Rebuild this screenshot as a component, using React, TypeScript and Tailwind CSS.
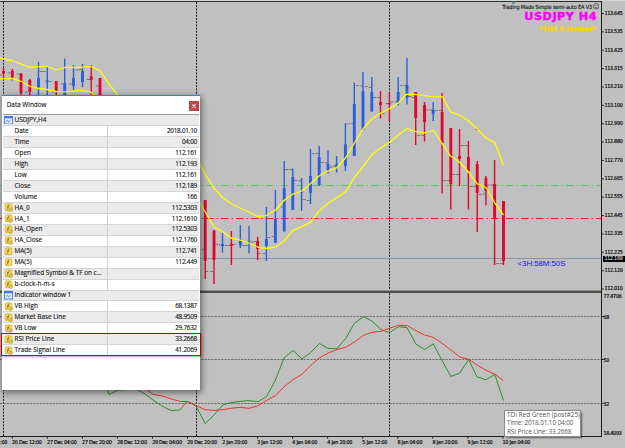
import React from "react";

type Candle = [number, number, number, number, number, "r" | "b"];

// x, wick top, wick bottom, body top, body bottom, direction
const candles: Candle[] = [
  [3.5, 67, 78, 71, 73.5, "r"], [12.3, 69, 80.5, 71, 77, "r"], [21, 73, 100, 73.5, 93, "r"], [29.8, 79, 100, 80, 92, "r"],
  [38.5, 62, 100, 78, 87, "b"], [47.3, 67, 100, 80.5, 82, "b"], [56.2, 81, 100, 81, 91, "r"], [64.7, 58.5, 100, 83, 98, "b"],
  [73.5, 65, 90, 78, 86, "b"], [82.5, 64, 87, 71, 82, "b"], [91.2, 65, 100, 76.5, 80, "r"], [100, 78, 100, 78, 100, "r"],
  [205.2, 200, 279, 200, 261, "r"], [214, 230, 284, 230.5, 260, "r"], [222.5, 233, 252.5, 244, 246, "b"], [231.4, 231, 265, 244, 246, "r"],
  [240.3, 225, 248, 239.5, 245.5, "b"], [249, 226, 253.5, 241.5, 243, "b"], [257.6, 237, 260, 241, 249, "r"], [266.4, 207, 261, 239, 246, "b"],
  [275.4, 190, 243, 219, 242.5, "b"], [284.2, 161, 232, 188, 231, "b"], [292.8, 168.5, 210, 177, 210, "b"], [301.6, 178, 211, 191, 192.5, "b"],
  [310.5, 149, 204, 176, 193, "b"], [319.2, 146, 186, 157, 185, "b"], [328, 150.5, 173.5, 164, 170, "b"], [336.6, 156, 172.5, 164, 167, "b"],
  [345.4, 123, 171, 144.5, 166, "b"], [354.3, 82.5, 156, 104, 156, "b"], [363, 72, 130, 91, 130, "b"], [371.8, 77, 111.5, 92, 111.5, "b"],
  [380.5, 91, 118.5, 102, 105, "r"], [389.4, 92, 121.5, 103, 104.5, "r"], [398.2, 77, 105.5, 92, 103, "b"], [407, 58, 104.5, 85, 98, "b"],
  [415.7, 92, 145, 92, 118, "r"], [424.5, 102, 141.5, 105, 122, "r"], [433.2, 102, 121, 110, 114, "b"], [442.1, 93, 193.5, 112, 143, "r"],
  [450.8, 128, 209.5, 128, 184, "r"], [459.5, 129, 186, 156, 159, "r"], [468.4, 141, 209.5, 157, 171, "r"], [477.2, 161, 232, 164, 193, "r"],
  [485.9, 176, 205.5, 178, 191, "r"], [494.6, 160, 265, 184, 218, "r"], [503.5, 201, 265, 201, 261, "r"],
];

// open / close marks beside the bars
const marks: [number, number][] = [
  [0, 75], [9, 73], [18, 74], [26, 92], [41, 71.5], [44, 71.5], [50, 81.5], [53, 92], [62, 84], [70, 84], [77, 70], [80, 69.5], [88, 79.5], [97, 86],
  [203, 249.5], [206.5, 271.5], [211.5, 271.5], [216.5, 244.3], [220, 245], [226, 245.5], [229, 245.5], [234, 244.5], [237, 239.5], [243, 245.5], [246.5, 245.5], [252, 242], [255, 241.5], [259, 253.5], [264, 253.5], [268.5, 237.5], [273, 236.5],
  [282, 207], [286.5, 169.5], [290.5, 169.5], [295.5, 180.5], [299.5, 181], [304, 199.5], [308, 200.5], [313, 153.5], [317, 153.5], [322, 162.5], [326, 163], [331, 167], [334.5, 166],
  [348, 124], [352, 123.5], [357, 85.5], [361, 86], [366, 86.5], [370, 87.5], [374.5, 97.5], [378.5, 97.5], [383, 113.5], [387, 103.5], [392, 102], [396, 101.5], [401, 85.5], [405, 85.5], [409.5, 96.5], [413, 97.5],
  [418.5, 135.5], [422.5, 135.5], [427, 110], [431, 110], [436, 110.5], [440, 110.5], [444.5, 180.5], [448.5, 180.5], [453.5, 174.5], [457.5, 174.5], [462, 145.5], [466, 145.5], [471, 186.5], [475, 186.5], [480, 194.5], [484, 194], [488.5, 185], [492, 185], [497.5, 263.5], [501.5, 263.5],
];

const upperA = "0,58 5,59 12,60.5 21,64 30,67.3 38,66.7 47.5,66.5 56,70 64.5,67.5 80,67.3 91,66.5 100,70.5 109,84 120,98";
const upperB = "199,162 205,174 214,188 223,198 231,203.5 240,208 249,212 257.5,216.5 266,215.7 275.5,210 284,200.5 293,194 302,191 310,184 319,176 328,171 336.5,168 345.5,158 354.3,143 363,129 371.5,119.3 380.5,113.3 389.4,108.7 398,103.3 406.5,94.3 415,94.4 430,96.4 442.5,96.8 450.7,112 459.3,115 468.4,120.8 477,128.6 486,138 494.8,142.6 503.5,165.5";
const lowerA = "0,78.7 12,78.7 21,81.3 30,86.3 38,88.3 47,89.5 56,91.3 65,91.8 80,90.4 91,92 96,100";
const lowerB = "199,202 205.2,212 214,227 222.5,231.5 231,238 240,240 249,243 257.5,247 266.5,248.5 275.5,247 284,241 293,230.4 302,226.6 310.5,222.3 319,211 328,203.3 337,197.5 345.8,191.6 354,178 363,166.5 371.5,155.3 380.5,148 389.4,142.4 398,135.3 407,128.6 415,131.4 424.5,132.8 433.5,130.4 442.1,143.3 450.7,156.3 459.5,162 468.5,172 477,183.7 486,187.5 495,203.3 503.5,215";
const tdiGreen = "106,385 109,394.5 118,390 136,389 145,394 153,400 162,406 171,410.5 180,410 187,401 196,406 205.2,423.5 214,415 223,404.8 231,402.6 240,401.4 248,400.6 258,401.6 266.5,396.6 275.5,380 284,358 293,350.3 302,359 310.5,352.7 319.5,343.5 328,348.4 337,348.6 346,338 354.2,323.5 363.4,316.7 372,321 381,329.6 389.5,332.7 398.5,326.7 407,327.6 416,344.2 424.6,349.6 433.3,343.8 442,360.6 450.8,376.4 459.5,373.3 468.6,359.6 477,376.8 486,379.8 494.7,374.3 503.5,400.5";
const tdiRed = "136,382 147,390 153,394.3 162,396 171,398.8 180,401.4 188,401.6 196,405.5 205,409.7 214,410.4 223,409.7 231,408.3 240,407.3 249,408.3 257.5,406 266.5,400.5 275.5,395.5 284,386.7 293,379.7 302,374.3 310.5,365.7 319.3,358 328.3,353 336.7,349.7 345.6,347.3 354.5,342 363.5,335.3 372,332.3 381.5,331.3 390,328 398.5,325.3 407.5,325.7 416,330.7 424.7,335 433.3,337.4 442,343.3 451,350 460,357 468.7,359.3 477,365 486,370.3 495,374.3 503.5,380.7";

const prices = ["113.645", "113.535", "113.425", "113.315", "113.210", "113.100", "112.990", "112.880", "112.770", "112.665", "112.555", "112.445", "112.335", "112.225", "112.120", "112.010"];
const times = ["26 Dec 12:00", "27 Dec 04:00", "27 Dec 20:00", "28 Dec 12:00", "29 Dec 04:00", "29 Dec 20:00", "2 Jan 20:00", "3 Jan 12:00", "4 Jan 04:00", "4 Jan 20:00", "5 Jan 12:00", "8 Jan 04:00", "8 Jan 20:00", "9 Jan 12:00", "10 Jan 04:00"];

type Row = { k: string; v?: string; icon?: "chart" | "fx" | "f" };
const rows: Row[] = [
  { k: "USDJPY,H4", icon: "chart" },
  { k: "Date", v: "2018.01.10" },
  { k: "Time", v: "04:00" },
  { k: "Open", v: "112.161" },
  { k: "High", v: "112.193" },
  { k: "Low", v: "112.161" },
  { k: "Close", v: "112.189" },
  { k: "Volume", v: "166" },
  { k: "HA_0", v: "112.5303", icon: "fx" },
  { k: "HA_1", v: "112.1610", icon: "fx" },
  { k: "HA_Open", v: "112.5303", icon: "fx" },
  { k: "HA_Close", v: "112.1760", icon: "fx" },
  { k: "MA(5)", v: "112.741", icon: "f" },
  { k: "MA(5)", v: "112.449", icon: "f" },
  { k: "Magnified Symbol & TF on c...", v: "", icon: "fx" },
  { k: "b-clock-h-m-s", v: "", icon: "fx" },
  { k: "Indicator window 1", icon: "chart" },
  { k: "VB High", v: "68.1387", icon: "fx" },
  { k: "Market Base Line", v: "48.9509", icon: "fx" },
  { k: "VB Low", v: "29.7632", icon: "fx" },
  { k: "RSI Price Line", v: "33.2668", icon: "fx" },
  { k: "Trade Signal Line", v: "41.2069", icon: "fx" },
];

function RowIcon({ kind }: { kind?: Row["icon"] }) {
  if (kind === "chart")
    return (
      <svg className="h-[8.5px] w-[9px] shrink-0" viewBox="0 0 9 8.5">
        <rect x=".5" y=".5" width="8" height="7.5" fill="#eef4ff" stroke="#4a7fe0" />
        <rect x="0" y="0" width="9" height="2.3" fill="#3d78e6" />
        <path d="M1.8 6.4 3.5 3.9 4.8 6.2 6.8 3.6" fill="none" stroke="#4a7fe0" strokeWidth=".8" />
      </svg>
    );
  if (!kind) return <span className="w-[9px]" />;
  return (
    <svg className="h-[9px] w-[9px] shrink-0" viewBox="0 0 9 9">
      <rect x="1.300" y=".9" width="6.500" height="6.800" rx=".8" fill="#f8dc5c" stroke="#cfa428" strokeWidth=".7" />
      <path d="M5.4 2.2C4.3 1.7 4.2 2.8 4 4S3.700 6.600 2.700 6.300M3 3.900H5" fill="none" stroke="#7a6018" strokeWidth=".8" />
      {kind === "fx" && (
        <g>
          <circle cx="6.800" cy="6.700" r="1.700" fill="#f9e47a" stroke="#b58a14" strokeWidth=".7" />
          <path d="M5.900 7.600 7.700 5.800" stroke="#8a6a10" strokeWidth=".6" />
        </g>
      )}
    </svg>
  );
}

function DataWindow() {
  return (
    <div className="absolute left-[2px] top-[95px] flex h-[295px] w-[198px] flex-col border-t border-[#3c84c6] bg-white px-[1px] text-[#111] shadow-[1px_2px_6px_1px_rgba(0,0,0,0.45)]">
      <div className="flex h-[18px] shrink-0 items-center justify-between pl-[3.7px] text-[6.4px]">
        <span className="-mt-px whitespace-nowrap [-webkit-text-stroke:0.1px_#111]">Data Window</span>
        <span className="mt-px flex h-[10px] w-[10px] items-center justify-center bg-[#bf474b]">
          <svg className="h-[4px] w-[4px]" viewBox="0 0 4 4"><path d="M.5.5 3.500 3.500M3.500.5.5 3.500" stroke="#fff" strokeWidth="1.100" /></svg>
        </span>
      </div>
      <div className="border-t border-[#9b9b9b]">
        {rows.map((r, i) => (
          <div key={i} className={`flex h-[10.97px] items-center border-b border-[#d4d4d4] text-[6.4px] leading-none [-webkit-text-stroke:0.12px_#111] ${i % 2 ? "bg-white" : "bg-[#ebebeb]"}`}>
            <div className={`flex h-full items-center gap-[1.500px] whitespace-nowrap pl-[1px] ${r.v === undefined ? "w-full" : "w-[105px] shrink-0 border-r border-[#cfcfcf]"}`}>
              <RowIcon kind={r.icon} />
              <span>{r.k}</span>
            </div>
            {r.v !== undefined && <span className="flex-1 pr-[2px] text-right tracking-[-0.25px]">{r.v}</span>}
          </div>
        ))}
      </div>
    </div>
  );
}

function Chart() {
  return (
    <svg className="absolute inset-0 h-[448px] w-[625px]" viewBox="0 0 625 448">
      <rect x="0" y="0" width="625" height="1" fill="#d2d6d0" />
      <rect x="0" y="1" width="602" height="1" fill="#303030" />
      <path d="M511 1.500h5l-2.500 3z" fill="#6d7f8c" />
      <g stroke="#1c1c1c" strokeWidth="1" strokeDasharray="2 1.200">
        <path d="M3.500 2V436M196.500 2V436M389.500 2V436" />
      </g>
      <path d="M0 316.500H601M0 359.500H601M0 403.500H601" stroke="#6e6e6e" strokeWidth="1" strokeDasharray="2.300 1" />
      <path d="M0 258.500H601" stroke="#8597aa" />
      <path d="M0 185.500H601" stroke="#62c562" strokeWidth="1.200" strokeDasharray="7.500 3 1.500 3" strokeDashoffset="4" />
      <path d="M0 218.500H601" stroke="#f02020" strokeDasharray="7.500 3 1.500 3" strokeDashoffset="4" />
      {marks.map(([x, y], i) => <rect key={i} x={x - 1.3} y={y - 0.5} width="3" height="1" fill="#777" />)}
      {candles.map(([x, t, b, bt, bb, c], i) => (
        <g key={i} fill={c === "r" ? "#e0062f" : "#2c5fe0"}>
          <rect x={x - 0.7} y={t} width="1.4" height={b - t} />
          <rect x={x - 1.45} y={bt} width="2.9" height={bb - bt} />
        </g>
      ))}
      <path d="M475.500 129.500h3.500" stroke="#d05020" />
      <g fill="none" stroke="#ffff00" strokeWidth="1.3" strokeLinejoin="round">
        <polyline points={upperA} /><polyline points={upperB} />
        <polyline points={lowerA} /><polyline points={lowerB} />
      </g>
      <g fill="none" strokeWidth=".9">
        <polyline points={tdiGreen} stroke="#178a1e" />
        <polyline points={tdiRed} stroke="#ee2424" />
      </g>
      <rect x="0" y="290" width="602" height="1" fill="#8e918c" />
      <rect x="0" y="291" width="602" height="2" fill="#4c4e4b" />
      <path d="M601.500 1V437M0 436.500H602" stroke="#1c1c1c" strokeWidth="1" />
      <path d={prices.map((_, i) => `M602 ${13.5 + i * 18.37}h1.8`).join("") + "M602 316.5h1.8M602 359.5h1.8M602 403.5h1.8"} stroke="#222" />
      <path d={times.map((_, i) => `M${12.3 + i * 35.04} 437v1.7`).join("")} stroke="#222" />
    </svg>
  );
}

export default function App() {
  return (
    <div className="relative h-[448px] w-[625px] overflow-hidden bg-[#c0c0c0] font-['Open_Sans','Noto_Sans',sans-serif]">
      <Chart />

      <div className="absolute left-[604.5px] top-[4.4px] flex flex-col font-['DejaVu_Sans_Condensed','DejaVu_Sans',sans-serif] text-[5.4px] leading-none tracking-[-0.3px] text-black [-webkit-text-stroke:0.15px_#000]">
        {prices.map((p) => <span key={p} className="flex h-[18.37px] items-center">{p}</span>)}
      </div>
      <div className="absolute left-[603px] top-[256px] flex h-[6px] w-[22px] items-center bg-black pl-[1.5px] font-['DejaVu_Sans_Condensed','DejaVu_Sans',sans-serif] text-[5.4px] leading-none tracking-[-0.3px] text-white">112.189</div>
      <div className="absolute left-[603.5px] top-[293px] flex h-[144px] flex-col font-['DejaVu_Sans_Condensed','DejaVu_Sans',sans-serif] text-[5.4px] leading-[6px] tracking-[-0.3px] text-black [-webkit-text-stroke:0.15px_#000]">
        <span>77.4706</span>
        <span className="mt-[14.5px]">68</span>
        <span className="mt-[37px]">50</span>
        <span className="mt-[38px]">32</span>
        <span className="mt-[23.5px]">18.4093</span>
      </div>
      <div className="absolute left-0 top-[438.5px] flex font-['DejaVu_Sans_Condensed','DejaVu_Sans',sans-serif] text-[5.4px] leading-[6px] tracking-[-0.25px] text-black [-webkit-text-stroke:0.15px_#000]">
        <span className="w-[12.04px] shrink-0">:00</span>
        {times.map((t) => <span key={t} className="w-[35.04px] shrink-0 whitespace-nowrap">{t}</span>)}
      </div>

      <div className="absolute right-[26px] top-[2.5px] flex flex-col items-end whitespace-nowrap">
        <div className="flex items-center gap-[0.5px] font-['DejaVu_Sans_Condensed','DejaVu_Sans',sans-serif] text-[5.6px] leading-[8px] tracking-[-0.17px] text-[#111] [-webkit-text-stroke:0.1px_#111]">
          <span>Trading Made Simple semi-auto EA V3</span>
          <svg className="h-[6.5px] w-[6.5px]" viewBox="0 0 7 7"><circle cx="3.5" cy="3.5" r="3" fill="none" stroke="#222" strokeWidth=".7" /><path d="M2.500 2.200v.8M4.500 2.200v.8M2 4.200q1.500 1.600 3 0" fill="none" stroke="#222" strokeWidth=".6" /></svg>
        </div>
        <span className="mr-[2px] font-['DejaVu_Sans'] text-[11.3px] font-bold leading-[11px] tracking-[0.45px] text-[#ff00ff] [-webkit-text-stroke:0.5px_#ff00ff]">USDJPY H4</span>
        <span className="mr-[3px] mt-[3.5px] font-['DejaVu_Sans'] text-[6px] font-bold leading-[8px] tracking-[0.12px] text-[#ffd000] [-webkit-text-stroke:0.35px_#ffd000]">*TMS S-Method*</span>
      </div>
      <div className="absolute left-[517.5px] top-[259px] whitespace-nowrap font-['Liberation_Sans',sans-serif] text-[7.8px] leading-[9px] text-[#1414f0]">&lt;3H:58M:50S</div>

      <DataWindow />
      <div className="absolute left-[1px] top-[333px] h-[23px] w-[200px] border border-[#c00000] shadow-[1px_1px_2px_rgba(0,0,0,0.35)]" />

      <div className="absolute left-[504px] top-[410px] flex h-[27px] w-[77px] flex-col justify-center whitespace-nowrap border border-[#8a8a8a] bg-white pl-[2px] text-[6.4px] leading-[8.2px] text-[#555] shadow-[1.5px_1.5px_1.5px_rgba(0,0,0,0.4)]">
        <span>TDI Red Green (post#25)</span>
        <span className="tracking-[-0.1px]">Time: 2018.01.10 04:00</span>
        <span className="tracking-[-0.1px]">RSI Price Line: 33.2668</span>
      </div>
    </div>
  );
}
